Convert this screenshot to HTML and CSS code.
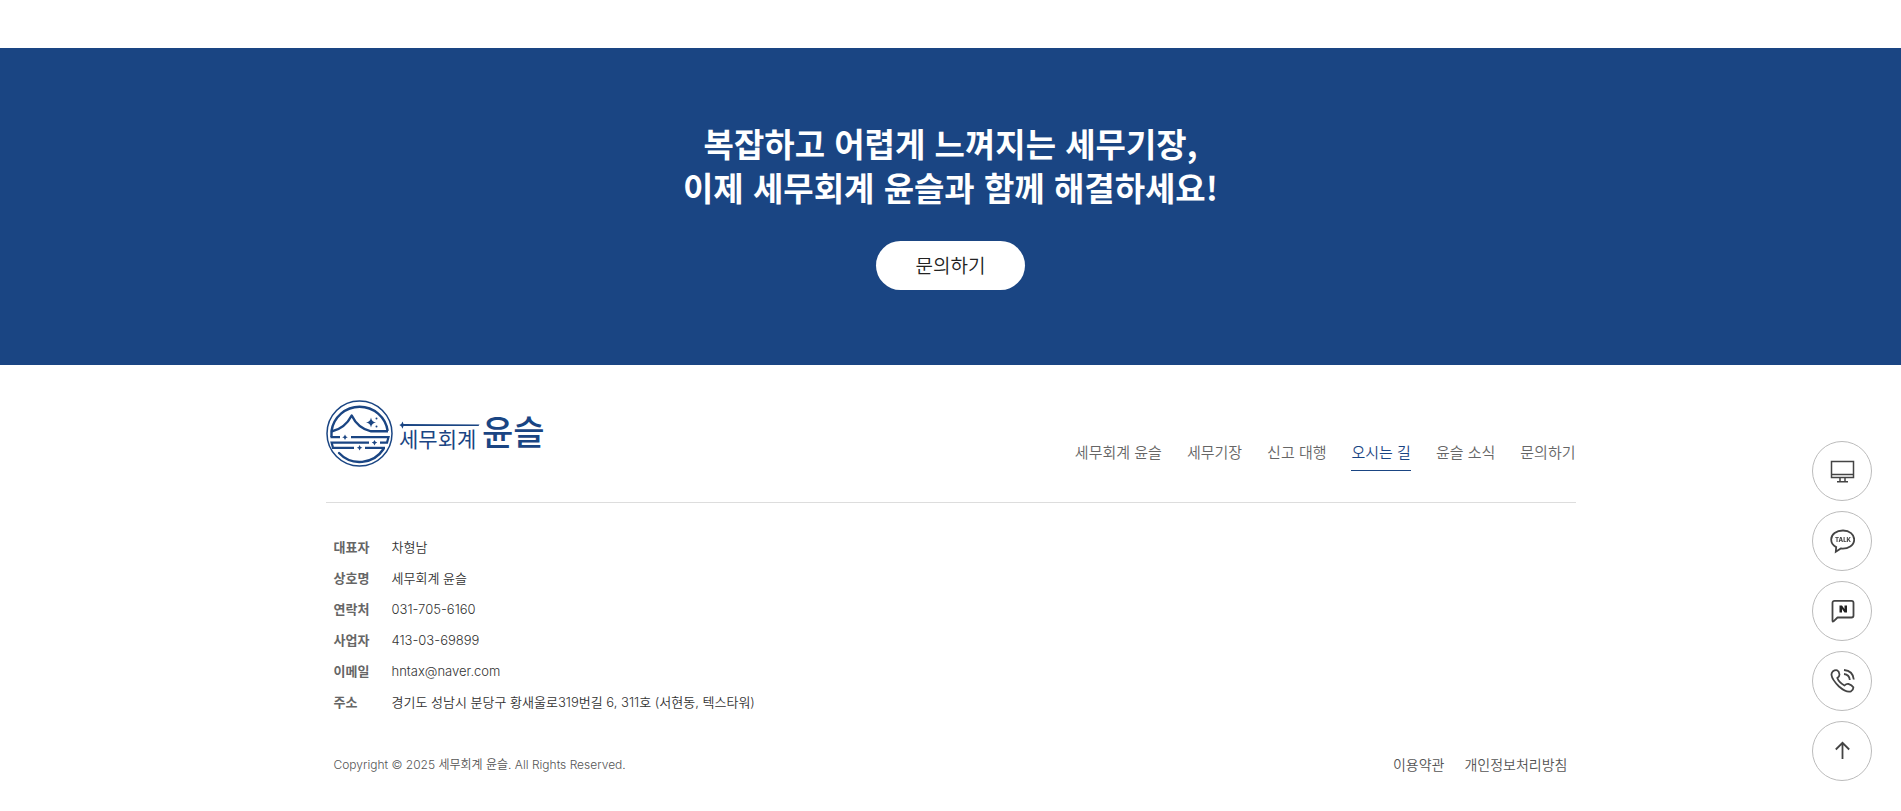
FILE: index.html
```html
<!DOCTYPE html>
<html lang="ko">
<head>
<meta charset="utf-8">
<meta name="viewport" content="width=device-width, initial-scale=1">
<title>세무회계 윤슬</title>
<link rel="stylesheet" href="styles.css">
</head>
<body>
<section class="cta">
  <h2 class="cta-title">복잡하고 어렵게 느껴지는 세무기장,<br>이제 세무회계 윤슬과 함께 해결하세요!</h2>
  <a class="cta-button" href="#contact">문의하기</a>
</section>

<footer class="footer">
  <div class="footer-top">
    <a class="logo" href="#home" aria-label="세무회계 윤슬">
      <svg width="220" height="68" viewBox="0 0 220 68" fill="none" stroke="#1a4583">
        <circle cx="33.5" cy="33.5" r="32.5" stroke-width="1.5"/>
        <g stroke-width="2.4">
          <path d="M5.500 37V31A28.400 28.400 0 0 1 61.700 31"/>
          <path d="M5.500 31.500Q19 28.500 25.700 15.500Q32 28.500 45 31.300H62" stroke-linejoin="round"/>
          <path d="M4.500 37.200H14M25 37.200H62.500L61 42.600H54M43 42.600H5.600L7 47.800H28M39 47.800H59" stroke-width="2.200"/>
          <path d="M13 53A28.400 28.400 0 0 0 57.500 49" stroke-linecap="round"/>
        </g>
        <g fill="#1a4583" stroke="none">
          <path d="M45 17.500q.7 4.300 5 5q-4.300 .7-5 5q-.7-4.300-5-5q4.300-.7 5-5z"/>
          <path d="M19 34.500l1 1.900 1.800.8-1.800.8-1 2-1-2-1.800-.8 1.800-.8zM48.500 39.900l1 1.900 1.800.8-1.800.8-1 2-1-2-1.800-.8 1.800-.8zM33.600 45l1 1.900 1.800.8-1.800.8-1 2-1-2-1.800-.8 1.800-.8z"/>
          <circle cx="50.500" cy="18.500" r="1"/><circle cx="50.500" cy="26.500" r="1"/>
          <path d="M76.500 21.500l1 2.600 76 .5-1 1.300-75 .2-1 2.700-1.200-2.500-2-1.200 2-1.200z"/>
        </g>
        <g class="logo-text">
          <text class="logo-small" x="73" y="47">세무회계</text>
          <text class="logo-large" x="156" y="45">윤슬</text>
        </g>
      </svg>
    </a>
    <nav class="menu" aria-label="하단 메뉴">
      <a href="#about">세무회계 윤슬</a>
      <a href="#bookkeeping">세무기장</a>
      <a href="#filing">신고 대행</a>
      <a class="active" href="#location" aria-current="page">오시는 길</a>
      <a href="#news">윤슬 소식</a>
      <a href="#contact">문의하기</a>
    </nav>
  </div>

  <dl class="info">
    <dt>대표자</dt><dd>차형남</dd>
    <dt>상호명</dt><dd>세무회계 윤슬</dd>
    <dt>연락처</dt><dd>031-705-6160</dd>
    <dt>사업자</dt><dd>413-03-69899</dd>
    <dt>이메일</dt><dd>hntax@naver.com</dd>
    <dt>주소</dt><dd>경기도 성남시 분당구 황새울로319번길 6, 311호 (서현동, 텍스타워)</dd>
  </dl>

  <div class="footer-bottom">
    <p class="copyright">Copyright © 2025 세무회계 윤슬. All Rights Reserved.</p>
    <nav class="policy" aria-label="약관">
      <a href="#terms">이용약관</a>
      <a href="#privacy">개인정보처리방침</a>
    </nav>
  </div>
</footer>

<aside class="quick" aria-label="빠른 메뉴">
  <a href="#site" aria-label="홈페이지">
    <svg viewBox="0 0 26 26"><path d="M2.500 3.500H24.500V19.500H2.500zM2.500 16.500H24.500M11 19.500V23.500M16 19.500V23.500M8 23.700H19"/></svg>
  </a>
  <a href="#talk" aria-label="카카오톡 상담">
    <svg class="bold" viewBox="0 0 26 26"><path d="M14 2.500C7.300 2.500 2.200 6.400 2.200 11.400C2.200 14.700 4.200 17.500 7.200 19.100L6.800 23.700L11.800 20.500C19 21.300 25.200 17.400 25.200 11.600C25.200 6.400 20.500 2.500 14 2.500Z"/><text class="talk-text" x="14" y="14" text-anchor="middle">TALK</text></svg>
  </a>
  <a href="#blog" aria-label="네이버 상담">
    <svg class="bold" viewBox="0 0 26 26"><path stroke-linejoin="round" d="M5.500 2.800H22.500A2 2 0 0 1 24.500 4.800V17.500A2 2 0 0 1 22.500 19.500H8.500L4.500 23.300Q3.500 24 3.500 22.500V4.800A2 2 0 0 1 5.500 2.800Z"/><path class="solid" d="M10.500 7.500H13L15.500 11V7.500H18V14.500H15.500L13 11V14.500H10.500Z"/></svg>
  </a>
  <a href="tel:031-705-6160" aria-label="전화 상담">
    <svg class="bold" viewBox="0 0 26 26"><path d="M3.700 3.500Q6 1.800 8.100 2.300Q10.100 3.300 10.500 6.500Q10.500 8.500 8.300 10Q10 14.500 15.500 17.500Q17.300 15.600 19.300 15.800Q22.800 17 24.300 19.200Q24.700 21.500 22 23.300Q17.500 25 10 18.500Q3 11.500 2.500 7Q2.300 5 3.700 3.500Z"/><path d="M15 6Q20.300 6.500 20.800 12M15 2Q24 2.800 24.800 11.500"/></svg>
  </a>
  <a href="#top" aria-label="맨 위로">
    <svg class="bold" viewBox="0 0 26 26"><path d="M13.500 21V5M6.800 11.500L13.500 4.800L20.200 11.500"/></svg>
  </a>
</aside>
</body>
</html>
```

FILE: styles.css
```css
* {
  box-sizing: border-box;
}

body {
  margin: 0;
  padding-top: 48px;
  background: #fff;
  color: #222;
  font-family: "Noto Sans CJK KR", sans-serif;
}

a {
  color: inherit;
  text-decoration: none;
}

.cta {
  display: flex;
  flex-direction: column;
  align-items: center;
  gap: 32px;
  padding: 73px 20px 75px;
  background: #1a4583;
  text-align: center;
}

.cta-title {
  margin: 0;
  color: #fff;
  font-size: 33px;
  font-weight: 700;
  line-height: 44px;
}

.cta-button {
  padding: 0 40px 2px;
  border-radius: 25px;
  background: #fff;
  font-size: 19px;
  font-weight: 350;
  line-height: 47px;
}

.footer {
  max-width: 1250px;
  margin: 0 auto;
}

.footer-top {
  display: flex;
  justify-content: space-between;
  align-items: flex-end;
  padding: 35px 0 31px;
  border-bottom: 1px solid #ddd;
}

.logo svg {
  display: block;
  margin-bottom: 3px;
}

.logo-text {
  fill: #1a4583;
  stroke: none;
}

.logo-small {
  font-size: 21px;
}

.logo-large {
  font-size: 34px;
  font-weight: 500;
}

.menu {
  display: flex;
  gap: 25px;
  color: #666;
  font-size: 15px;
  font-weight: 350;
  line-height: 36px;
}

.menu a {
  border-bottom: 1px solid transparent;
}

.menu .active {
  border-color: #1a4583;
  color: #1a4583;
}

.info {
  display: grid;
  grid-template-columns: 58px 1fr;
  margin: 29px 0 0;
  padding: 0 8px;
  font-family: Inter, "Noto Sans CJK KR", sans-serif;
  font-size: 13px;
  line-height: 31px;
}

.info dt {
  color: #666;
  font-weight: 700;
}

.info dd {
  margin: 0;
  color: #333;
  font-weight: 350;
}

.footer-bottom {
  display: flex;
  justify-content: space-between;
  padding: 31px 8px;
  color: #555;
  font-weight: 350;
  line-height: 31px;
}

.copyright {
  margin: 0;
  font-family: Inter, "Noto Sans CJK KR", sans-serif;
  font-size: 12px;
}

.policy {
  display: flex;
  gap: 20px;
  font-size: 14px;
}

.quick {
  position: fixed;
  right: 29px;
  bottom: 30px;
  display: grid;
  gap: 10px;
}

.quick a {
  display: grid;
  place-items: center;
  width: 60px;
  height: 60px;
  border: 1px solid #bbb;
  border-radius: 50%;
  background: #fff;
}

.quick svg {
  width: 26px;
  height: 26px;
  fill: none;
  stroke: #444;
  stroke-width: 1.5;
}

.quick .bold {
  stroke-width: 1.8;
}

.quick .solid {
  fill: #222;
  stroke: none;
}

.quick .talk-text {
  fill: #444;
  stroke: none;
  font-family: Inter, sans-serif;
  font-size: 6px;
  font-weight: 800;
}
```
